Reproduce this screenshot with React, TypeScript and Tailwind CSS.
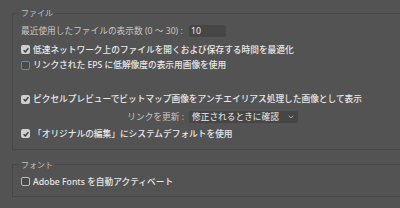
import { ChevronDown } from "lucide-react";

const font = { fontFamily: '"Noto Sans", "Noto Sans CJK JP", sans-serif' };

function Checkbox({ checked, focused }: { checked?: boolean; focused?: boolean }) {
  if (checked) {
    return (
      <span className="flex w-[9px] h-[9px] shrink-0 items-center justify-center rounded-[2px] bg-[#cfcfcf]">
        <svg viewBox="0 0 10 10" className="w-[8px] h-[8px]">
          <path d="M2 5.2 L4.2 7.3 L8 2.8" fill="none" stroke="#3c3c3c" strokeWidth="1.8" />
        </svg>
      </span>
    );
  }
  return (
    <span
      className={`block w-[9px] h-[9px] shrink-0 rounded-[2px] border bg-[#4a4a4a] ${
        focused ? "border-[#4b8ee0]" : "border-[#bdbdbd]"
      }`}
    />
  );
}

function CheckRow({ label, checked, focused, className }: { label: string; checked?: boolean; focused?: boolean; className: string }) {
  return (
    <div className={`flex items-center h-[14px] pl-[8px] gap-[3px] ${className}`}>
      <Checkbox checked={checked} focused={focused} />
      <span className="text-[#e8e8e8] font-medium whitespace-nowrap">{label}</span>
    </div>
  );
}

export default function App() {
  return (
    <div className="w-[400px] h-[208px] overflow-hidden bg-[#535353] text-[8.7px] leading-[12px]" style={font}>
      <fieldset className="ml-[12px] mt-[7px] w-[420px] border border-[#474747] pl-0 pb-[8px]">
        <legend className="ml-[6px] px-[2px] text-[8px] text-[#c2c2c2]">ファイル</legend>

        <div className="flex items-center h-[14px] mt-[5px] pl-[8px]">
          <span className="text-[#c6c6c6] whitespace-nowrap w-[168px]">最近使用したファイルの表示数 (0 〜 30) :</span>
          <div className="h-[12px] w-[37px] rounded-[2px] bg-[#464646] pl-[2px] text-[#ececec] flex items-center">10</div>
        </div>

        <CheckRow className="mt-[4.5px]" checked label="低速ネットワーク上のファイルを開くおよび保存する時間を最適化" />
        <CheckRow className="mt-[1.5px]" focused label="リンクされた EPS に低解像度の表示用画像を使用" />

        <CheckRow className="mt-[20px]" checked label="ピクセルプレビューでビットマップ画像をアンチエイリアス処理した画像として表示" />

        <div className="flex items-center h-[14px] mt-[4px]">
          <span className="w-[171px] text-right text-[#c6c6c6] whitespace-nowrap">リンクを更新 :</span>
          <div className="ml-[5px] flex items-center justify-between h-[12px] w-[109px] rounded-[2px] bg-[#464646] pl-[3px] pr-[3px] text-[#ececec]">
            <span className="whitespace-nowrap">修正されるときに確認</span>
            <ChevronDown className="w-[8px] h-[8px] text-[#bdbdbd]" strokeWidth={2.5} />
          </div>
        </div>

        <CheckRow className="mt-[2.5px]" checked label="「オリジナルの編集」にシステムデフォルトを使用" />
      </fieldset>

      <fieldset className="ml-[12px] mt-[9px] w-[420px] border border-[#474747] pb-[7px]">
        <legend className="ml-[6px] px-[2px] text-[8px] text-[#c2c2c2]">フォント</legend>
        <CheckRow className="mt-[4px]" label="Adobe Fonts を自動アクティベート" />
      </fieldset>
    </div>
  );
}
